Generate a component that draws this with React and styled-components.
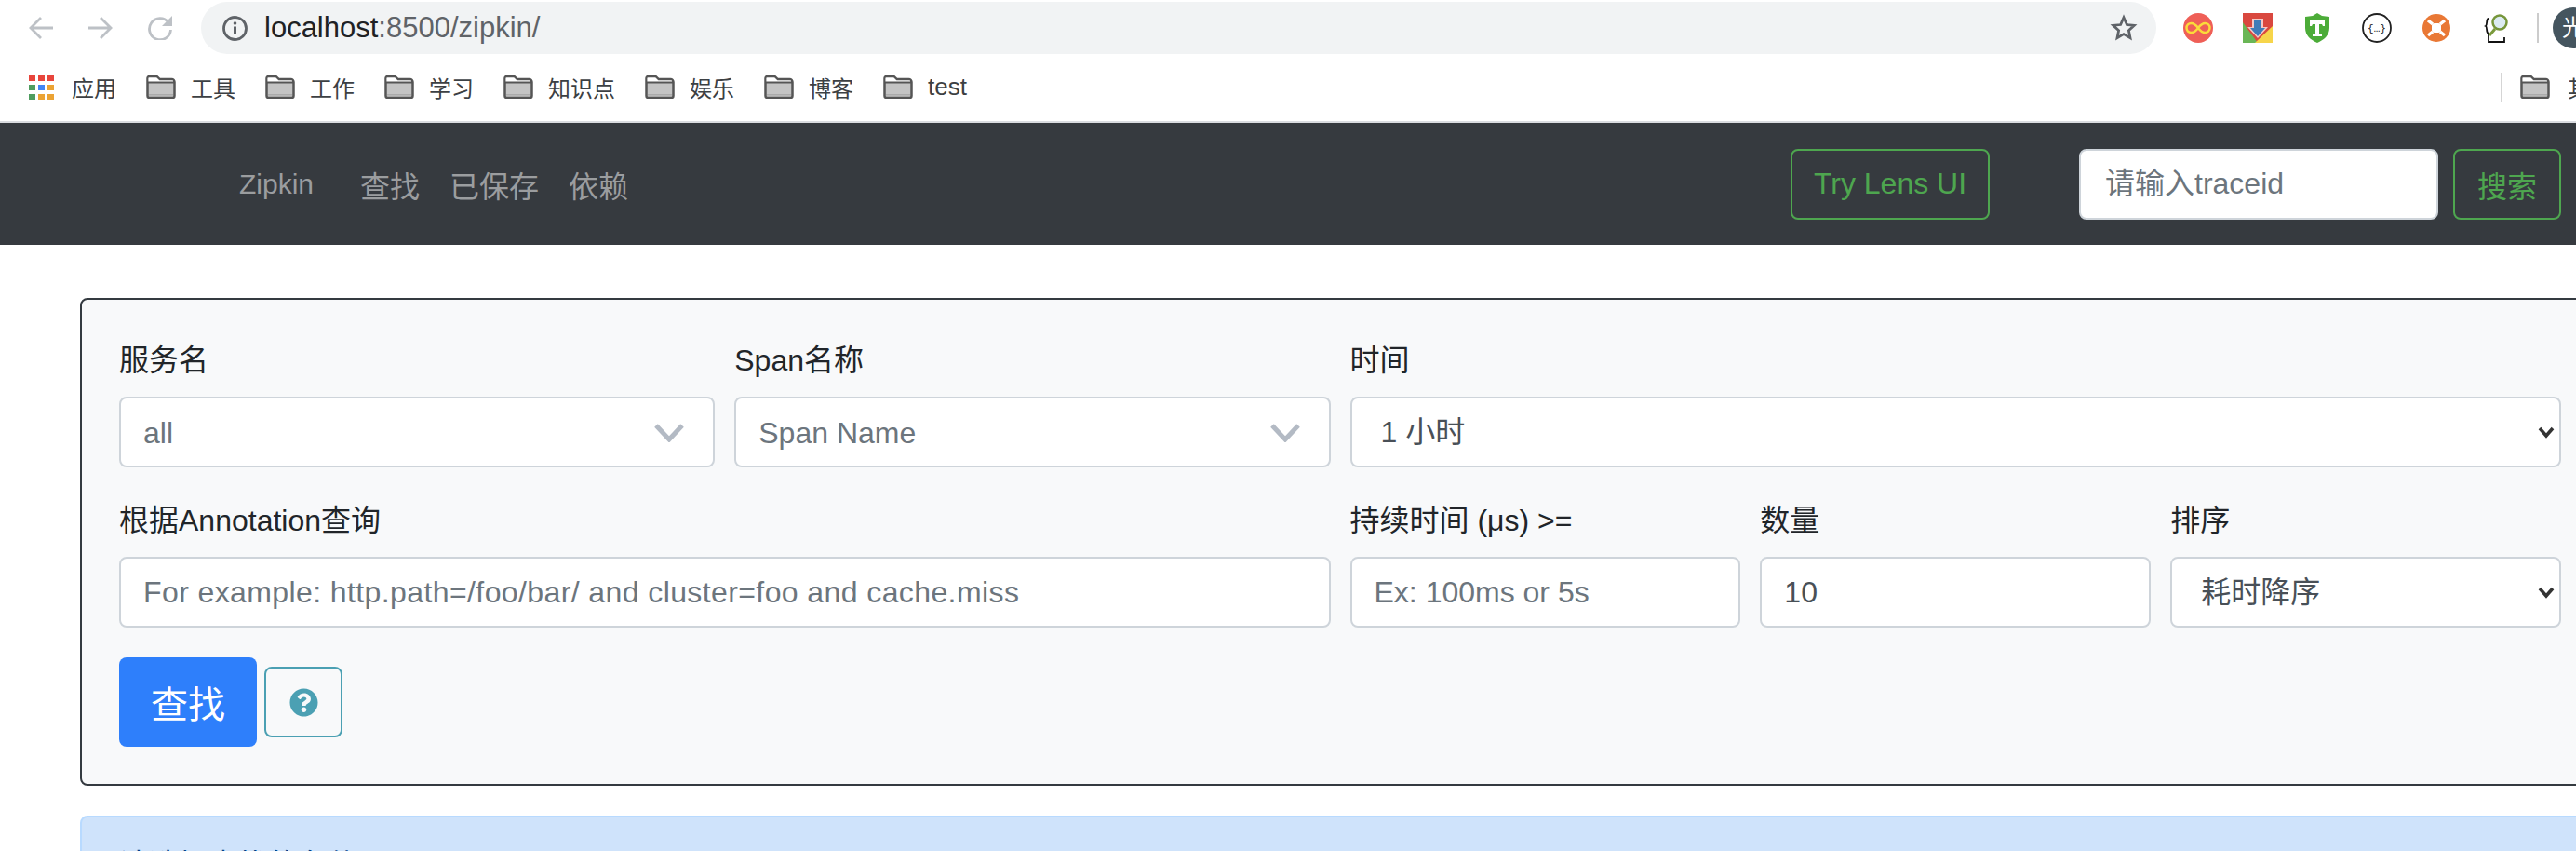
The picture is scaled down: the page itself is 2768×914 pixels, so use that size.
import React from 'react';
import styled, { createGlobalStyle } from 'styled-components';
import { FaQuestionCircle } from 'react-icons/fa';

const FONT = '"Liberation Sans", "Noto Sans CJK SC", sans-serif';

const GlobalStyle = createGlobalStyle`
  html, body {
    margin: 0;
    padding: 0;
    width: 2768px;
    height: 914px;
    overflow: hidden;
    background: #fff;
    font-family: ${FONT};
  }
  * { box-sizing: border-box; }
`;

const Page = styled.div`
  width: 2768px;
  height: 914px;
  overflow: hidden;
`;

/* browser chrome */
const Toolbar = styled.div`
  height: 60px;
  display: flex;
  align-items: center;
  padding-left: 31px;
  background: #fff;
`;

const NavIcon = styled.svg`
  width: 26px;
  height: 26px;
  margin-right: ${p => p.$gap}px;
  flex: none;
`;

const Omnibox = styled.div`
  width: 2101px;
  height: 56px;
  border-radius: 28px;
  background: #f1f3f4;
  display: flex;
  align-items: center;
  padding: 0 20px 0 23px;
  flex: none;
`;

const Url = styled.div`
  margin-left: 18px;
  font-size: 31px;
  color: #5f6368;
  flex: 1;
  span { color: #202124; }
`;

const ExtIcons = styled.div`
  display: flex;
  align-items: center;
  flex: none;
  margin-left: 29px;
`;

const ExtSlot = styled.svg`
  width: 32px;
  height: 32px;
  margin-right: ${p => p.$gap ?? 32}px;
  flex: none;
`;

const ToolbarDivider = styled.div`
  width: 2px;
  height: 32px;
  background: #ccc;
  margin: 0 15px 0 0;
  flex: none;
`;

const Avatar = styled.div`
  width: 44px;
  height: 44px;
  border-radius: 50%;
  background: #45555f;
  color: #fff;
  font-size: 24px;
  text-align: center;
  line-height: 44px;
  flex: none;
`;

const BookmarkBar = styled.div`
  height: 72px;
  display: flex;
  align-items: center;
  padding: 0 0 3px 31px;
  background: #fff;
  border-bottom: 2px solid #dadce0;
  overflow: hidden;
`;

const Bookmark = styled.div`
  display: flex;
  align-items: center;
  gap: ${p => p.$inner ?? 16}px;
  font-size: ${p => p.$size ?? 24}px;
  color: #3c4043;
  margin-right: 32px;
  flex: none;
`;

const AppsGrid = styled.div`
  display: grid;
  grid-template-columns: repeat(3, 7px);
  grid-auto-rows: 6px;
  gap: 4px 3px;
`;

const AppDot = styled.i`
  display: block;
  background: ${p => p.$c};
`;

const BarTail = styled.div`
  margin-left: auto;
  width: 81px;
  flex: none;
  display: flex;
  align-items: center;
  gap: 19px;
  font-size: 24px;
  color: #3c4043;
  white-space: nowrap;
  overflow: hidden;
  &::before {
    content: '';
    width: 2px;
    height: 32px;
    background: #d5d5d5;
    flex: none;
  }
`;

/* zipkin nav */
const Nav = styled.nav`
  height: 131px;
  background: #363a3f;
  display: flex;
  align-items: center;
  padding: 0 16px 0 257px;
`;

const Brand = styled.div`
  font-size: 30px;
  color: #9b9d9f;
  margin-right: 50px;
`;

const NavLink = styled.div`
  font-size: 32px;
  color: #9b9d9f;
  margin-right: 32px;
`;

const Spacer = styled.div`
  flex: 1;
`;

const NavButton = styled.div`
  height: 76px;
  border: 2px solid #4ea64f;
  border-radius: 8px;
  color: #4ea64f;
  display: flex;
  align-items: center;
  justify-content: center;
  width: ${p => p.$w}px;
  font-size: 32px;
  flex: none;
`;

const TraceInput = styled.input`
  width: 386px;
  height: 76px;
  margin: 0 16px 0 96px;
  border: 2px solid #ced4da;
  border-radius: 8px;
  padding: 0 26px;
  font: 32px ${FONT};
  background: #fff;
  outline: none;
  flex: none;
  &::placeholder { color: #6c757d; opacity: 1; }
`;

/* search form */
const Content = styled.div`
  width: 2708px;
  margin: 57px 0 0 86px;
`;

const Card = styled.div`
  height: 524px;
  border: 2px solid #343a40;
  border-radius: 8px;
  background: #f8f9fa;
  padding: 41px 40px 0;
`;

const FormGrid = styled.div`
  display: grid;
  grid-template-columns: repeat(12, 1fr);
  column-gap: 21px;
  row-gap: 33px;
`;

const Field = styled.div`
  grid-column: span ${p => p.$span};
  min-width: 0;
`;

const Label = styled.div`
  height: 48px;
  line-height: 48px;
  margin-bottom: 15px;
  font-size: 32px;
  color: #212529;
`;

const Combo = styled.div`
  height: 76px;
  border: 2px solid #ced4da;
  border-radius: 8px;
  background: #fff;
  display: flex;
  align-items: center;
  justify-content: space-between;
  padding: 2px 31px 0 24px;
  font-size: 32px;
  color: #6c757d;
`;

const Chevron = styled.svg`
  width: 32px;
  height: 20px;
  flex: none;
`;

const TextInput = styled.input`
  display: block;
  width: 100%;
  height: 76px;
  border: 2px solid #ced4da;
  border-radius: 8px;
  background: #fff;
  padding: 0 24px;
  font: 32px ${FONT};
  letter-spacing: ${p => p.$spacing || 0}px;
  color: #495057;
  outline: none;
  &::placeholder { color: #6c757d; opacity: 1; }
`;

const SelectWrap = styled.div`
  position: relative;
  height: 76px;
`;

const Select = styled.select`
  appearance: none;
  display: block;
  width: 100%;
  height: 76px;
  border: 2px solid #ced4da;
  border-radius: 8px;
  background: #fff;
  padding: 0 24px 0 31px;
  font: 32px ${FONT};
  color: #495057;
  outline: none;
`;

const SelectArrow = styled.svg`
  position: absolute;
  right: 7px;
  top: 32px;
  width: 18px;
  height: 13px;
  pointer-events: none;
`;

const Actions = styled.div`
  display: flex;
  align-items: center;
  gap: 8px;
  margin-top: 32px;
`;

const SearchButton = styled.button`
  width: 148px;
  height: 96px;
  border: 0;
  border-radius: 8px;
  background: #2e7ffb;
  color: #fff;
  font: 40px ${FONT};
`;

const HelpButton = styled.button`
  width: 84px;
  height: 76px;
  border: 2px solid #4ba0b3;
  border-radius: 8px;
  background: transparent;
  color: #4ba0b3;
  font-size: 31px;
  display: flex;
  align-items: center;
  justify-content: center;
  padding: 0;
`;

const Alert = styled.div`
  height: 120px;
  margin-top: 32px;
  border: 2px solid #b8daff;
  border-radius: 8px;
  background: #cfe3fb;
  padding: 27px 40px;
  font-size: 32px;
  line-height: 48px;
  color: #004085;
`;

const Folder = () => (
  <svg width="32" height="25" viewBox="0 0 32 25" style={{ flex: 'none' }}>
    <path d="M1.500 3a2 2 0 0 1 2-2h8l3 3h13a3 3 0 0 1 3 3v15a2 2 0 0 1-2 2H3.500a2 2 0 0 1-2-2z" fill="#c4c4c4" stroke="#555" strokeWidth="2.500" />
    <path d="M2.500 2.500h9l3 3h14.500v1.500H2.500z" fill="#fff" />
    <path d="M2 7.500h28" stroke="#555" strokeWidth="2" />
    <path d="M3 20h26v1.500H3z" fill="#aaa" />
  </svg>
);

const bookmarks = [
  { name: '工具' },
  { name: '工作' },
  { name: '学习' },
  { name: '知识点' },
  { name: '娱乐' },
  { name: '博客' },
  { name: 'test', size: 26 },
];

const appColors = ['#e8453c', '#e8453c', '#e8453c', '#4f9d5f', '#4285f4', '#eba334', '#4f9d5f', '#eba334', '#eba334'];

const ComboChevron = () => (
  <Chevron viewBox="0 0 32 20" fill="none" stroke="#b3bac4" strokeWidth="5">
    <path d="M2 2l14 15L30 2" />
  </Chevron>
);

const NativeArrow = () => (
  <SelectArrow viewBox="0 0 18 13" fill="none" stroke="#333" strokeWidth="3.500">
    <path d="M2 2l7 8 7-8" />
  </SelectArrow>
);

export default function App() {
  return (
    <Page>
      <GlobalStyle />
      <Toolbar>
        <NavIcon $gap={38} viewBox="0 0 26 26" fill="none" stroke="#bdc1c6" strokeWidth="2.800">
          <path d="M26 13H2M13 2L2 13l11 11" />
        </NavIcon>
        <NavIcon $gap={38} viewBox="0 0 26 26" fill="none" stroke="#bdc1c6" strokeWidth="2.800">
          <path d="M0 13h24M13 2l11 11-11 11" />
        </NavIcon>
        <NavIcon $gap={31} viewBox="0 0 26 26" fill="none" stroke="#bdc1c6" strokeWidth="2.800">
          <path d="M22 7a11.500 11.500 0 1 0 2.500 8" />
          <path d="M26 0v11H15z" fill="#bdc1c6" stroke="none" />
        </NavIcon>
        <Omnibox>
          <svg width="27" height="27" viewBox="0 0 27 27" style={{ flex: 'none' }}>
            <circle cx="13.500" cy="13.500" r="12" fill="none" stroke="#5f6368" strokeWidth="2.800" />
            <path d="M13.500 11.500v8" stroke="#5f6368" strokeWidth="3" />
            <circle cx="13.500" cy="8" r="1.800" fill="#5f6368" />
          </svg>
          <Url><span>localhost</span>:8500/zipkin/</Url>
          <svg width="30" height="30" viewBox="0 0 24 24" fill="none" stroke="#5f6368" strokeWidth="2.200" style={{ flex: 'none' }}>
            <path d="M12 3l2.700 6.200 6.300.600-4.700 4.300 1.300 6.400L12 17.200 6.400 20.500l1.300-6.400L3 9.800l6.300-.6z" />
          </svg>
        </Omnibox>
        <ExtIcons>
          <ExtSlot viewBox="0 0 32 32">
            <circle cx="16" cy="16" r="16" fill="#ef5f57" />
            <path d="M16 16c-3-4-5-5-7.500-5a5 5 0 0 0 0 10c2.500 0 4.500-1 7.500-5s5-5 7.500-5a5 5 0 0 1 0 10c-2.500 0-4.500-1-7.500-5z" fill="none" stroke="#fbdb3a" strokeWidth="2.500" />
          </ExtSlot>
          <ExtSlot viewBox="0 0 32 32">
            <rect width="32" height="32" fill="#d9483f" />
            <path d="M0 10l16 22H0z" fill="#6ab656" />
            <path d="M32 14v18H13z" fill="#f7d54a" />
            <path d="M10 6h12v9h5L16 27 5 15h5z" fill="#fff" opacity=".7" />
            <path d="M12 7h8v9h4l-8 9-8-9h4z" fill="#3f7cb8" />
          </ExtSlot>
          <ExtSlot viewBox="0 0 32 32">
            <path d="M16 0l5 3 8 1v12c0 8-6 13-13 16C9 29 3 24 3 16V4l8-1z" fill="#4cac38" />
            <path d="M8 8h16v6h-2l-1-2h-3v11h3v2H11v-2h3V12h-3l-1 2H8z" fill="#fff" />
          </ExtSlot>
          <ExtSlot viewBox="0 0 32 32">
            <circle cx="16" cy="16" r="15" fill="#fff" stroke="#222" strokeWidth="1.800" />
            <text x="16" y="20" textAnchor="middle" fontSize="11" fontFamily="Liberation Mono, monospace" fill="#111">{'{…}'}</text>
          </ExtSlot>
          <ExtSlot viewBox="0 0 32 32">
            <circle cx="16" cy="16" r="15" fill="#e97835" />
            <rect x="11" y="11" width="10" height="10" rx="3" fill="#fff" />
            <path d="M7 8l5 4M25 8l-5 4M7 24l5-4M25 24l-5-4" stroke="#fff" strokeWidth="3.500" />
          </ExtSlot>
          <ExtSlot $gap={28} viewBox="0 0 32 32">
            <path d="M8 6c-3 0-1 7-3 8 2 1 0 8 3 8v9h17v-5" fill="none" stroke="#111" strokeWidth="1.800" />
            <path d="M15 17l-6 7" stroke="#7a9a3c" strokeWidth="3" />
            <circle cx="20" cy="10" r="7.500" fill="#dcebf2" stroke="#76963a" strokeWidth="2.500" />
          </ExtSlot>
          <ToolbarDivider />
          <Avatar>光</Avatar>
        </ExtIcons>
      </Toolbar>

      <BookmarkBar>
        <Bookmark $inner={19}>
          <AppsGrid>
            {appColors.map((c, i) => <AppDot key={i} $c={c} />)}
          </AppsGrid>
          应用
        </Bookmark>
        {bookmarks.map(b => (
          <Bookmark key={b.name} $size={b.size}><Folder />{b.name}</Bookmark>
        ))}
        <BarTail><Folder />其他书签</BarTail>
      </BookmarkBar>

      <Nav>
        <Brand>Zipkin</Brand>
        <NavLink>查找</NavLink>
        <NavLink>已保存</NavLink>
        <NavLink>依赖</NavLink>
        <Spacer />
        <NavButton $w={214}>Try Lens UI</NavButton>
        <TraceInput placeholder="请输入traceid" />
        <NavButton $w={116}>搜索</NavButton>
      </Nav>

      <Content>
        <Card>
          <FormGrid>
            <Field $span={3}>
              <Label>服务名</Label>
              <Combo>all<ComboChevron /></Combo>
            </Field>
            <Field $span={3}>
              <Label>Span名称</Label>
              <Combo>Span Name<ComboChevron /></Combo>
            </Field>
            <Field $span={6}>
              <Label>时间</Label>
              <SelectWrap>
                <Select defaultValue="1h">
                  <option value="1h">1 小时</option>
                </Select>
                <NativeArrow />
              </SelectWrap>
            </Field>
            <Field $span={6}>
              <Label>根据Annotation查询</Label>
              <TextInput $spacing={0.4} placeholder="For example: http.path=/foo/bar/ and cluster=foo and cache.miss" />
            </Field>
            <Field $span={2}>
              <Label>持续时间 (μs) &gt;=</Label>
              <TextInput placeholder="Ex: 100ms or 5s" />
            </Field>
            <Field $span={2}>
              <Label>数量</Label>
              <TextInput defaultValue="10" />
            </Field>
            <Field $span={2}>
              <Label>排序</Label>
              <SelectWrap>
                <Select defaultValue="d">
                  <option value="d">耗时降序</option>
                </Select>
                <NativeArrow />
              </SelectWrap>
            </Field>
          </FormGrid>
          <Actions>
            <SearchButton>查找</SearchButton>
            <HelpButton><FaQuestionCircle /></HelpButton>
          </Actions>
        </Card>
        <Alert>请选择查找的条件</Alert>
      </Content>
    </Page>
  );
}
